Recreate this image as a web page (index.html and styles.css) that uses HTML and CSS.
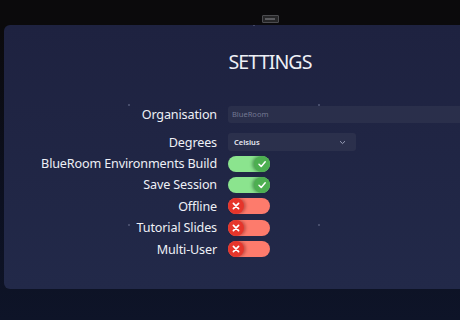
FILE: index.html
```html
<html lang="en">

<head>
    <meta charset="UTF-8">
    <meta name="viewport" content="width=device-width, initial-scale=1.0">
    <title>Settings</title>
    <link rel="stylesheet" href="styles.css">
</head>

<body>
<div class="screen">
  <div class="topbar">
    <div class="handle"><span></span></div>
  </div>

  <div class="panel">
    <h1 class="title">SETTINGS</h1>

    <div class="form">
      <label class="label row-input">Organisation</label>
      <div class="row-input">
        <input class="field" type="text" placeholder="BlueRoom">
      </div>

      <label class="label row-input row-degrees">Degrees</label>
      <div class="row-input row-degrees">
        <div class="select">
          <span>Celsius</span>
          <svg width="7" height="5" viewBox="0 0 7 5"><path d="M1 1.2 L3.5 3.6 L6 1.2" fill="none" stroke="#9aa0b8" stroke-width="1"/></svg>
        </div>
      </div>

      <label class="label row-toggle">BlueRoom Environments Build</label>
      <div class="row-toggle"><div class="toggle on"><span class="knob"><svg width="16" height="16" viewBox="0 0 16 16"><path d="M5 8.3 L7.2 10.4 L11.2 5.8" fill="none" stroke="#fff" stroke-width="1.5" stroke-linecap="round" stroke-linejoin="round"/></svg></span></div></div>

      <label class="label row-toggle">Save Session</label>
      <div class="row-toggle"><div class="toggle on"><span class="knob"><svg width="16" height="16" viewBox="0 0 16 16"><path d="M5 8.3 L7.2 10.4 L11.2 5.8" fill="none" stroke="#fff" stroke-width="1.5" stroke-linecap="round" stroke-linejoin="round"/></svg></span></div></div>

      <label class="label row-toggle">Offline</label>
      <div class="row-toggle"><div class="toggle off"><span class="knob"><svg width="16" height="16" viewBox="0 0 16 16"><path d="M5.4 5.4 L10.6 10.6 M10.6 5.4 L5.4 10.6" fill="none" stroke="#fff" stroke-width="1.7" stroke-linecap="round"/></svg></span></div></div>

      <label class="label row-toggle">Tutorial Slides</label>
      <div class="row-toggle"><div class="toggle off"><span class="knob"><svg width="16" height="16" viewBox="0 0 16 16"><path d="M5.4 5.4 L10.6 10.6 M10.6 5.4 L5.4 10.6" fill="none" stroke="#fff" stroke-width="1.7" stroke-linecap="round"/></svg></span></div></div>

      <label class="label row-toggle">Multi-User</label>
      <div class="row-toggle"><div class="toggle off"><span class="knob"><svg width="16" height="16" viewBox="0 0 16 16"><path d="M5.4 5.4 L10.6 10.6 M10.6 5.4 L5.4 10.6" fill="none" stroke="#fff" stroke-width="1.7" stroke-linecap="round"/></svg></span></div></div>
    </div>
  </div>
</div>
</body>

</html>
```

FILE: styles.css
```css
body {
    margin: 0;
    width: 460px;
    height: 320px;
    overflow: hidden;
    font-family: "Noto Sans", "Open Sans", sans-serif;
    color: #eef0f6;
    background-color: #0c0b0d;
    background-image:
        radial-gradient(circle, #8d90a0 0.8px, transparent 1.2px),
        radial-gradient(circle, #8d90a0 0.8px, transparent 1.2px),
        radial-gradient(circle, #6e7388 0.8px, transparent 1.2px),
        linear-gradient(#0b0a0c 0, #0b0a0c 25px, #0c1020 200px, #0e1428 320px);
    background-size: 230px 150px, 310px 170px, 170px 110px, 100% 100%;
    background-position: 63px 6px, 220px 10px, 10px 50px, 0 0;
}

.screen {
    width: 532px;
    margin-left: 4px;
}

.topbar {
    height: 25px;
    display: flex;
    justify-content: center;
    align-items: flex-start;
}

.handle {
    margin-top: 15px;
    width: 17px;
    height: 8px;
    box-sizing: border-box;
    border: 1px solid #4c4c50;
    border-radius: 1px;
    background: #262628;
    display: flex;
    align-items: center;
    justify-content: center;
}

.handle span {
    width: 10px;
    height: 2px;
    background: #5a5a5e;
}

.panel {
    height: 264px;
    box-sizing: border-box;
    padding-top: 23px;
    border-radius: 6px;
    background-color: #1f2441;
    background-image:
        radial-gradient(circle, #474d6c 0.7px, transparent 1.1px),
        radial-gradient(circle, #434968 0.7px, transparent 1.1px),
        linear-gradient(#1e2240, #222949);
    background-size: 190px 120px, 260px 140px, 100% 100%;
    background-position: 30px 20px, 120px 70px, 0 0;
}

.title {
    margin: 0;
    text-align: center;
    font-size: 19.6px;
    line-height: 28px;
    font-weight: 400;
    letter-spacing: -0.9px;
    word-spacing: 0;
}

.form {
    margin-top: 25px;
    display: grid;
    grid-template-columns: 213px 1fr;
    column-gap: 11px;
    align-items: center;
}

.label {
    text-align: right;
    font-size: 12.6px;
    letter-spacing: -0.15px;
    white-space: nowrap;
}

.row-input {
    height: 26px;
    display: flex;
    align-items: center;
    justify-content: flex-end;
}

div.row-input {
    justify-content: flex-start;
}

.row-degrees {
    box-sizing: border-box;
    padding-top: 4px;
}

.row-toggle {
    height: 21.4px;
    line-height: 21.4px;
}

div.row-toggle {
    display: flex;
    align-items: center;
}

.field {
    width: 310px;
    height: 17px;
    box-sizing: border-box;
    border: none;
    border-radius: 3px;
    padding: 0 4px;
    background: #2a2f4b;
    font-family: "Noto Sans", sans-serif;
    font-size: 7.5px;
    color: #eef0f6;
}

.field::placeholder {
    color: #737892;
}

.select {
    width: 128px;
    height: 18px;
    box-sizing: border-box;
    padding: 0 10px 0 6px;
    border-radius: 3px;
    background: #2b304c;
    display: flex;
    align-items: center;
    justify-content: space-between;
    font-family: "Noto Sans", sans-serif;
    font-size: 7.5px;
    font-weight: 600;
    color: #e8eaf2;
}

.toggle {
    position: relative;
    width: 42px;
    height: 16px;
    border-radius: 8px;
}

.toggle.on {
    background: #8be48e;
}

.toggle.off {
    background: #fd7b6c;
}

.knob {
    position: absolute;
    top: 0;
    width: 16px;
    height: 16px;
    border-radius: 50%;
}

.knob svg {
    display: block;
}

.toggle.on .knob {
    right: 0;
    background: #4daf51;
    box-shadow: -2px 0 3px rgba(20, 80, 30, 0.45);
}

.toggle.off .knob {
    left: 0;
    background: #e6352b;
    box-shadow: 2px 0 3px rgba(120, 20, 20, 0.4);
}
```
